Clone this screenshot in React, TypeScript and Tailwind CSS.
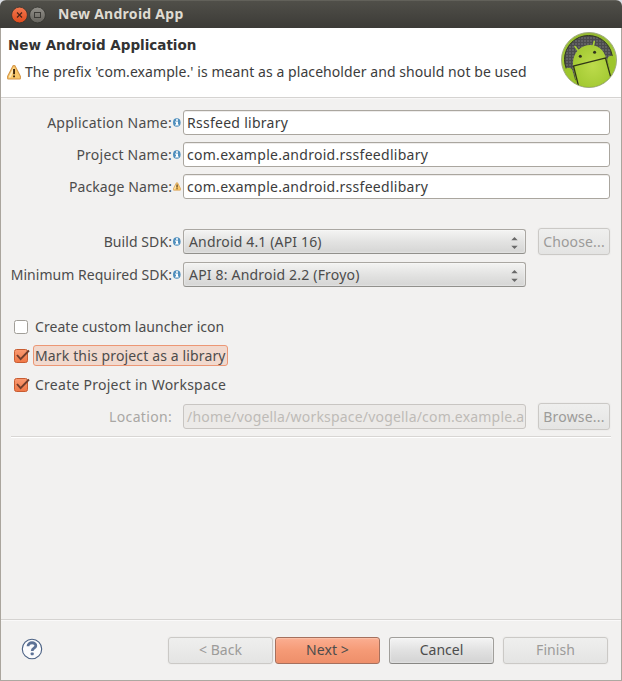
import type { ReactNode } from "react";

function InfoMark() {
  return (
    <svg className="h-[9px] w-[8px] shrink-0" viewBox="0 0 8 9">
      <ellipse cx="3.800" cy="4.500" rx="3.800" ry="4.300" fill="#4f8fbd" />
      <path d="M3 1.200h2v1.500H3zM2 3.400h3v3h.800v1.200H2V6.400h1V4.600H2z" fill="#fff" />
    </svg>
  );
}

function WarningMark({ className }: { className: string }) {
  return (
    <svg className={className} viewBox="0 0 14 15">
      <path
        d="M5.8 1.2Q7-.2 8.2 1.2L13.4 11.5v1.7q0 .8-.8.8H1.4q-.8 0-.8-.8v-1.7z"
        fill="#f9c86b"
        stroke="#d5984a"
        strokeWidth="1.1"
      />
      <path d="M6.4 2.6L2 11.4v1h1.600l3.100-7z" fill="#fde9b8" />
      <path d="M6.1 4h1.900v5.300H6.1zM6.1 10.500h1.900v1.800H6.1z" fill="#3c260d" />
    </svg>
  );
}

function AndroidLogo() {
  return (
    <svg className="h-[58px] w-[58px]" viewBox="0 0 58 58">
      <defs>
        <linearGradient id="rim" x1="0" y1="0" x2="0" y2="1">
          <stop offset="0" stopColor="#93b82d" />
          <stop offset=".5" stopColor="#a5ce37" />
          <stop offset="1" stopColor="#82a81e" />
        </linearGradient>
        <radialGradient id="robot" cx=".5" cy=".45" r=".65">
          <stop offset="0" stopColor="#bddb4b" />
          <stop offset="1" stopColor="#9cc52c" />
        </radialGradient>
        <pattern id="mesh" width="3" height="3" patternUnits="userSpaceOnUse">
          <rect width="3" height="3" fill="#4b4b4d" />
          <rect width="2" height="2" fill="#616163" />
        </pattern>
        <clipPath id="disc">
          <circle cx="29" cy="29" r="27" />
        </clipPath>
      </defs>
      <circle cx="29" cy="29" r="27.500" fill="url(#rim)" stroke="#a0aa83" />
      <circle cx="28.500" cy="28.500" r="24" fill="url(#mesh)" stroke="#2f3421" strokeWidth="1" />
      <g clipPath="url(#disc)">
        <path d="M18.500 20l-3.500-4.500M33 15.500l1.300-5" stroke="#a9d135" strokeWidth="1.600" strokeLinecap="round" />
        <path d="M13 35C11 12 40 6 46 26.800L53 47 50 60H18z" fill="url(#robot)" />
        <path d="M13 35.200l33-8.400M13.500 35l5 20M45.500 27l5.200 19" stroke="#303616" strokeWidth="1.300" fill="none" />
        <path d="M5 40C5 36 11 36 12.300 39L17.500 57 7 52z" fill="#9dc52c" />
        <path d="M47.500 30C46 25 53 23 54.500 27L57 40 52 46z" fill="#9dc52c" />
        <circle cx="20.300" cy="25.300" r="1.500" fill="#30331e" />
        <circle cx="34.600" cy="21.300" r="1.500" fill="#30331e" />
      </g>
    </svg>
  );
}

function Row({ label, tracking, mark, children, dim = false }: { label: string; tracking: string; mark?: ReactNode; children: ReactNode; dim?: boolean }) {
  return (
    <div className="flex h-[27px] items-center">
      <div className={`flex w-[171px] justify-end ${dim ? "text-[#a9a7a4]" : ""}`}>
        <span className={tracking}>{label}</span>
      </div>
      <div className="flex w-[11px] items-center pl-[1px]">{mark}</div>
      {children}
    </div>
  );
}

function Field({ text, tracking }: { text: string; tracking: string }) {
  return (
    <div className="flex h-[25px] w-[427px] items-center rounded-[3px] border border-[#aaa69f] bg-white pl-[3px] text-[#3c3c3c] shadow-[inset_0_1px_0_#eeeceb]">
      <span className={tracking}>{text}</span>
    </div>
  );
}

function Choice({ text, tracking }: { text: string; tracking: string }) {
  return (
    <div className="flex h-[25px] w-[343px] items-center justify-between rounded-[3px] border border-[#aaa7a2] border-b-[#91908c] bg-linear-to-b from-[#f4f4f3] via-[#e3e3e2] to-[#d5d5d4] pr-[7px] pl-[5px] shadow-[inset_0_0_2px_#ffffff]">
      <span className={tracking}>{text}</span>
      <svg className="mt-[3px] h-[12px] w-[7px]" viewBox="0 0 7 12">
        <path d="M.3 3.200L3.500 0l3.200 3.200zM.3 8.800L3.500 12l3.200-3.200z" fill="#696969" />
      </svg>
    </div>
  );
}

function Button({ children, className, tracking }: { children: string; className: string; tracking: string }) {
  return (
    <button className={`flex h-[27px] shrink-0 items-center justify-center rounded-[3px] border bg-linear-to-b ${className}`}>
      <span className={tracking}>{children}</span>
    </button>
  );
}

const disabled = "border-[#cbc9c6] from-[#efefee] to-[#e4e4e3] text-[#9c9b99] shadow-[0_0_0_1px_#eeedec]";

function Check({ label, tracking, on = false, focused = false }: { label: string; tracking: string; on?: boolean; focused?: boolean }) {
  return (
    <div className="flex h-[21px] items-center pl-[12px]">
      <svg className="h-[17px] w-[19px] shrink-0" viewBox="0 0 19 17">
        <defs>
          <linearGradient id="tickbox" x1="0" y1="0" x2="0" y2="1">
            <stop offset="0" stopColor="#fa9a72" />
            <stop offset="1" stopColor="#f07746" />
          </linearGradient>
        </defs>
        <rect x="1.500" y="2.500" width="13" height="13" rx="2" fill={on ? "url(#tickbox)" : "#fff"} stroke={on ? "#c85c31" : "#a19e98"} />
        {on && <path d="M4 8l3.600 4.200L16 3.500" fill="none" stroke="#713d2c" strokeWidth="1.900" />}
      </svg>
      <div className={`ml-[1px] flex h-[21px] items-center rounded-[3px] border px-[1px] ${focused ? "border-[#ec9775] bg-[#f1d9ce]" : "border-transparent"}`}>
        <span className={tracking}>{label}</span>
      </div>
    </div>
  );
}

export default function App() {
  return (
    <div className="h-[681px] w-[622px] bg-[#d9dde3] font-['Noto_Sans',sans-serif] text-[14px] leading-[20px] whitespace-nowrap text-[#4c4c4c]">
      <div className="flex h-full flex-col overflow-hidden rounded-t-[6px] border-b border-[#ada8a1] bg-[#f2f1f0]">
        <header className="flex h-[28px] shrink-0 items-center border-t border-[#62615a] bg-linear-to-b from-[#504f49] to-[#3c3b37] pl-[11px]">
          <svg className="h-[18px] w-[36px]" viewBox="0 0 36 18">
            <defs>
              <linearGradient id="close" x1="0" y1="0" x2="0" y2="1">
                <stop offset="0" stopColor="#f47950" />
                <stop offset="1" stopColor="#df4a1c" />
              </linearGradient>
              <linearGradient id="maximize" x1="0" y1="0" x2="0" y2="1">
                <stop offset="0" stopColor="#92908a" />
                <stop offset="1" stopColor="#65635d" />
              </linearGradient>
            </defs>
            <circle cx="8.500" cy="9" r="7.900" fill="url(#close)" stroke="#34332f" strokeWidth=".8" />
            <path d="M6 6.500l5 5m0-5l-5 5" stroke="#4a2418" strokeWidth="1.200" />
            <circle cx="26.500" cy="9" r="7.900" fill="url(#maximize)" stroke="#34332f" strokeWidth=".8" />
            <rect x="23.500" y="6.500" width="6" height="5" fill="none" stroke="#3b3a36" />
          </svg>
          <span className="-mt-[2px] ml-[11px] text-[14px] font-bold tracking-[0.27px] text-[#dfdbd2]">New Android App</span>
        </header>
        <div className="flex min-h-0 flex-1 flex-col border-x border-[#aaa59d]">
          <section className="flex h-[70px] shrink-0 justify-between border-b border-[#d5d3d1] bg-white">
            <div className="flex flex-col pt-[7px] pl-[6px]">
              <h1 className="pl-[1px] font-['DejaVu_Sans',sans-serif] text-[13.5px] font-bold text-[#333333]">New Android Application</h1>
              <div className="mt-[7px] flex items-center">
                <WarningMark className="h-[15px] w-[14px]" />
                <span className="ml-[4px] tracking-[0.07px] text-[#3c3c3c]">The prefix 'com.example.' is meant as a placeholder and should not be used</span>
              </div>
            </div>
            <div className="pt-[3px] pr-[3px]">
              <AndroidLogo />
            </div>
          </section>
          <main className="flex flex-1 flex-col border-t border-[#f8f7f7] pt-[10px]">
            <div className="flex flex-col gap-[5px]">
              <Row label="Application Name:" tracking="tracking-[0.25px]" mark={<InfoMark />}><Field text="Rssfeed library" tracking="tracking-[0.27px]" /></Row>
              <Row label="Project Name:" tracking="tracking-[0.23px]" mark={<InfoMark />}><Field text="com.example.android.rssfeedlibary" tracking="tracking-[0.28px]" /></Row>
              <Row label="Package Name:" tracking="tracking-[0.1px]" mark={<WarningMark className="h-[9px] w-[8px]" />}><Field text="com.example.android.rssfeedlibary" tracking="tracking-[0.28px]" /></Row>
            </div>
            <div className="mt-[28px] flex flex-col gap-[6px]">
              <Row label="Build SDK:" tracking="tracking-[0.08px]" mark={<InfoMark />}>
                <Choice text="Android 4.1 (API 16)" tracking="tracking-[0.15px]" />
                <Button className={`ml-[12px] w-[72px] ${disabled}`} tracking="tracking-[0.15px]">Choose...</Button>
              </Row>
              <Row label="Minimum Required SDK:" tracking="tracking-[0.04px]" mark={<InfoMark />}><Choice text="API 8: Android 2.2 (Froyo)" tracking="tracking-[0.19px]" /></Row>
            </div>
            <div className="mt-[28px] flex flex-col gap-[8px]">
              <Check label="Create custom launcher icon" tracking="tracking-[0.05px]" />
              <Check label="Mark this project as a library" tracking="tracking-[0.14px]" on focused />
              <Check label="Create Project in Workspace" tracking="tracking-[0.26px]" on />
            </div>
            <div className="mt-[8px]">
              <Row label="Location:" tracking="tracking-[0.33px]" dim>
                <div className="flex h-[25px] w-[343px] items-center rounded-[3px] border border-[#c8c5c2] bg-[#eceae8] pl-[3px] text-[#bebbb7]">
                  <span className="tracking-[0.19px]">/home/vogella/workspace/vogella/com.example.a</span>
                </div>
                <Button className={`ml-[12px] w-[72px] ${disabled}`} tracking="tracking-[0.2px]">Browse...</Button>
              </Row>
            </div>
            <div className="mx-[10px] mt-[6px] h-[2px] border-t border-[#d8d6d4] bg-white" />
          </main>
          <footer className="flex h-[61px] shrink-0 items-center border-t border-[#d5d3d1] pr-[13px] pl-[20px] shadow-[inset_0_1px_0_#faf9f9]">
            <svg className="-mt-[2px] h-[22px] w-[22px]" viewBox="0 0 22 22">
              <circle cx="11" cy="11" r="9.700" fill="#fbfbfc" stroke="#4a6083" strokeWidth="1.100" />
              <path d="M7 8.300c0-4.900 8.200-4.400 7.800-.4-.2 2.400-3.600 2.300-3.600 5.100" fill="none" stroke="#5d7296" strokeWidth="2.800" />
              <rect x="9.700" y="14.500" width="3" height="2.800" rx=".7" fill="#5d7296" />
            </svg>
            <div className="ml-auto flex">
              <Button className={`w-[105px] ${disabled}`} tracking="tracking-[0px]">{"< Back"}</Button>
              <Button className="ml-[2px] w-[105px] border-[#a5705d] from-[#fbae91] via-[#f59a76] to-[#ee8f6a] shadow-[inset_0_1px_1px_#fcc0a8]" tracking="tracking-[0.1px]">{"Next >"}</Button>
              <Button className="ml-[9px] w-[105px] border-[#a19f9b] border-b-[#888784] from-[#f4f4f4] via-[#e1e1e1] to-[#d3d3d3] shadow-[inset_0_0_2px_#ffffff]" tracking="tracking-[0px]">Cancel</Button>
              <Button className={`ml-[9px] w-[105px] ${disabled}`} tracking="tracking-[0.05px]">Finish</Button>
            </div>
          </footer>
        </div>
      </div>
    </div>
  );
}
